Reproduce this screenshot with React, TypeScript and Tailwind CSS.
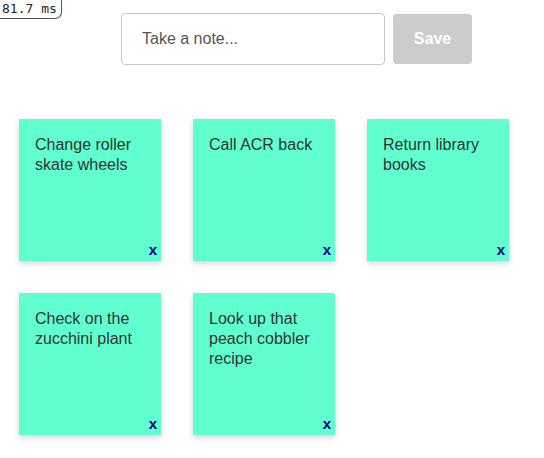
const notes = [
  "Change roller skate wheels",
  "Call ACR back",
  "Return library books",
  "Check on the zucchini plant",
  "Look up that peach cobbler recipe",
];

export default function App() {
  return (
    <div className="relative min-h-[458px] bg-white" style={{ fontFamily: "'Liberation Sans', Arial, sans-serif" }}>
      {/* timing badge */}
      <div
        className="absolute left-0 top-0 h-[19px] w-[62px] rounded-br-[7px] border-r border-b border-[#555] bg-white pl-[2px] text-[13px] leading-[17px] text-[#222]"
        style={{ fontFamily: "'DejaVu Sans Mono', monospace" }}
      >
        81.7 ms
      </div>

      <div className="flex items-center gap-2 pt-[13px] pl-[121px]">
        <input
          className="h-[52px] w-[264px] rounded border border-[#c8c8c8] px-5 text-base text-[#333] placeholder:text-[#555] outline-none"
          placeholder="Take a note..."
        />
        <button className="h-[50px] w-[79px] rounded bg-[#cccccc] text-base font-bold text-white">Save</button>
      </div>

      <div className="grid grid-cols-[repeat(3,142px)] gap-8 pt-[54px] pl-[19px]">
        {notes.map((n) => (
          <div key={n} className="relative h-[142px] bg-[#61ffd0] p-4 shadow-[0_3px_6px_rgba(0,0,0,0.15)]">
            <p className="text-base leading-5 text-[#333]">{n}</p>
            <span className="absolute right-[4px] bottom-[1px] text-[15px] font-bold leading-5 text-[#000080]">x</span>
          </div>
        ))}
      </div>
    </div>
  );
}
